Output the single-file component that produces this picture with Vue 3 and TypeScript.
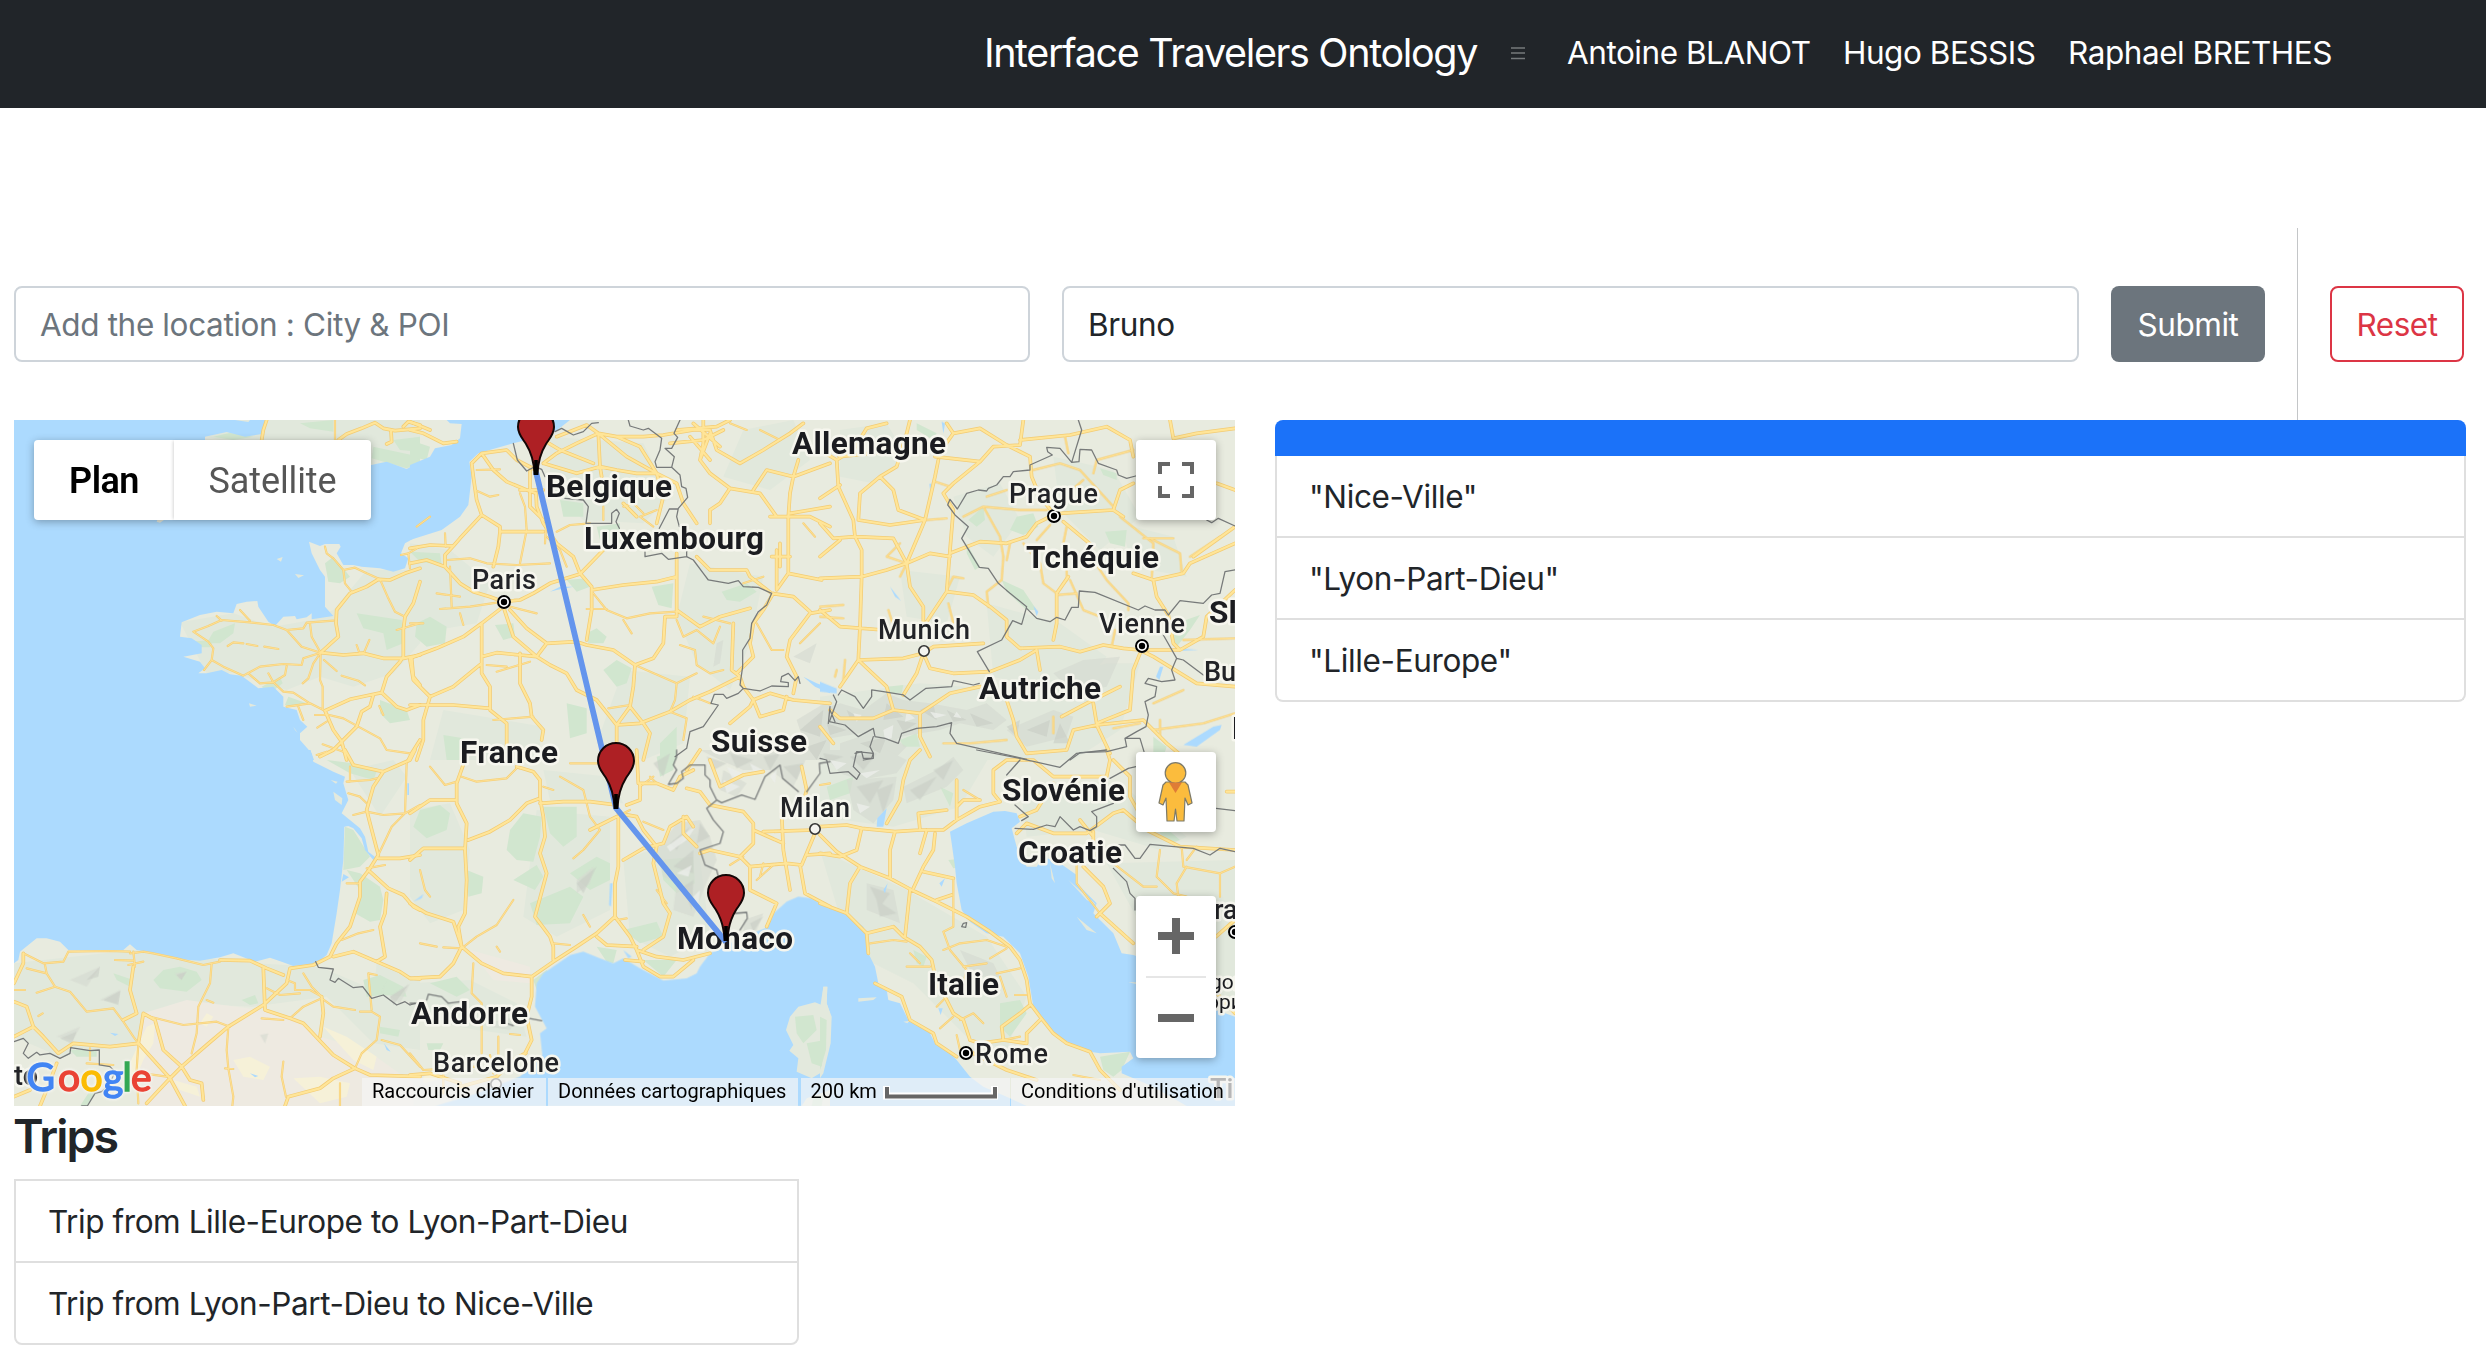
<script setup lang="ts">
import { ref } from 'vue'

interface Label {
  text: string
  x: number
  y: number
  w?: number
  kind: 'country' | 'city' | 'small'
}

type Layer = string[]

const authors = ['Antoine BLANOT', 'Hugo BESSIS', 'Raphael BRETHES']
const place = ref('')
const traveler = ref('Bruno')
const stations = ['"Nice-Ville"', '"Lyon-Part-Dieu"', '"Lille-Europe"']
const trips = ['Trip from Lille-Europe to Lyon-Part-Dieu', 'Trip from Lyon-Part-Dieu to Nice-Ville']

// The map is drawn in six tiles, west to east and north to south, three units per pixel.
const tiles = [
  [0, 410],
  [410, 410],
  [820, 410],
  [0, 750],
  [410, 750],
  [820, 750],
]

const tint: Layer = [
  'M540,637L700,610 820,650 935,630 1000,600 1100,480 1260,480V700L1180,790 1060,830 960,800 860,840 700,790 620,790Z M620,80L790,30H1260V180L1100,160 900,150Z',
  'M0,400L120,420 240,520 200,640 80,660 0,620Z M420,80L700,100 780,260 700,340 520,330 420,240Z M840,460L1060,500 1020,700 960,840 860,760 800,620Z M640,780L840,800 820,1000 700,1050 560,1000Z M1000,60L1150,30 1200,150 1080,240 940,200Z M100,900L400,950 380,1050H60Z',
  'M60,60L200,40 260,140 160,220 60,200Z M400,260L540,220 600,330 520,440 440,380Z M500,580L720,640 860,740 760,860 520,800Z M700,140L880,180 960,320 840,420 720,300Z M240,480L420,500 380,640 260,620Z M900,340L1060,380 1100,500 940,470Z M0,860L300,820 560,840 860,760 960,760 900,960 760,1050H0Z',
  'M42,640L400,600 760,640 960,650 1260,780V900L1120,880 980,740 760,770 540,760 400,880 180,920 42,860Z M1050,60L1180,30 1220,80 1140,200Z M1130,640L1260,690V760L1120,740Z',
  'M0,180L120,160 180,300 160,480 60,520 0,440Z M380,180L600,200 600,480 440,560 340,500Z M640,330L860,250 900,560 780,620 660,560Z M400,60L600,80 640,160 420,150Z M0,700L180,690 320,760 350,860 200,840 0,800Z',
  'M0,300L260,420 500,560 620,740 560,900 440,860 280,700 160,640 60,500Z M0,0H520L420,170 220,230 0,200Z M600,100L900,100 1100,260 1020,300 820,240 620,260Z M860,340L1245,330V780L1100,640 960,520Z',
]

const plain: Layer = [
  '', '', '',
  'M430,790L560,750 780,780 880,800 960,860 1100,900 1240,1000 1240,1068H420L410,900Z',
  'M180,600L360,650 360,700 250,690Z',
  '',
]

const farmland: Layer = [
  '', '', '',
  'M440,830L465,820 460,880 430,930 400,1000 380,960Z M520,990L590,1010 600,1040 540,1020Z M700,930L750,920 810,950 790,990 730,980Z M880,985L960,980 1050,1000 1040,1040 960,1060Z M970,830L1040,860 1130,920 1120,960 1060,930Z M620,790L640,800 620,830 600,820Z',
  'M40,980L90,960 80,990 40,1000Z',
  '',
]

const greens: Layer = [
  'M640,80L690,68 760,80 700,90Z M900,40L1000,30 1000,65 930,55Z M1180,90L1260,80V125L1200,120Z M1120,110L1260,140V160L1220,175 1115,145Z M975,460L1000,440 1030,475 1050,500 1020,520 985,515Z M1070,610L1205,630 1210,700 1160,720 1150,670 1090,655Z M620,700L640,665 705,640 700,670 660,700Z M570,695L640,690 630,712 575,712Z M785,830L840,800 848,820 810,850Z M865,860L920,880 880,890 855,885Z M1140,870L1220,900 1230,930 1170,940 1140,910Z',
  'M0,90L60,110 50,150 0,140Z M0,425L90,430 95,465 30,455Z M450,270L520,280 520,320 460,320Z M470,510L530,505 540,530 500,545Z M20,640L60,620 110,650 105,700 50,710 15,680Z M530,670L560,655 590,680 580,700 535,700Z M725,530L790,520 785,595 745,585Z M935,545L1010,520 1040,545 990,575 950,570Z M580,780L620,750 665,775 650,820 620,830Z M470,880L530,895 530,970 480,985Z M100,975L160,985 170,1050H110Z M255,645L310,640 315,680 280,690Z M750,1000L800,950 800,1050H750Z M560,350L630,340 630,400 570,390Z',
  'M445,330L490,290 495,330 470,350Z M590,320L640,310 655,350 610,375 570,360Z M545,510L610,540 650,600 620,600 560,545Z M855,365L920,360 915,410 870,400Z M1040,650L1140,615 1110,660 1070,710Z M200,830L250,825 245,850 200,850Z M290,40L350,70 340,90 290,60Z M840,175L890,190 890,210 850,195Z M440,400L480,470 465,480 440,430Z M1000,980L1040,1010 1030,1040H1000Z M240,990L290,970 300,1010 250,1010Z',
  'M1035,230L1060,240 1110,320 1080,350 1030,360Z M1040,360L1080,370 1140,410 1150,450 1140,510 1110,515 1065,490 1080,420Z M980,30L1060,40 1130,65 1120,90 1050,70Z M490,660L540,650 590,665 605,690 560,725 480,715 460,690Z M725,750L765,735 775,760 750,765Z M1090,690L1140,675 1210,710 1220,740 1150,735 1100,740Z M1140,830L1200,840 1195,860 1140,850Z M340,670L400,690 390,710 350,690Z M210,900L290,900 290,920 230,920Z M265,1030L300,1010 260,1068H240Z',
  'M30,180L90,165 120,190 110,240 50,265 10,230Z M300,240L340,190 395,200 390,260 370,335 320,330 290,300Z M400,170L500,170 500,260 460,290 420,250Z M310,390L380,345 400,380 375,420Z M170,360L220,380 215,430 175,440Z M360,460L480,410 520,440 480,520 380,525Z M480,370L560,320 600,340 600,390 540,420Z M640,540L740,515 760,560 690,580Z M750,330L850,320 855,400 800,430 760,390Z M560,590L620,600 610,640 590,635Z M60,700L140,680 180,720 140,740Z M370,690L410,660 420,670 380,720Z M740,20L800,0 790,60 750,80Z M700,630L800,630 760,680Z M1160,800L1210,800 1220,840 1180,880 1160,850Z M1190,890L1240,900 1230,950Z M50,880L100,880 90,900 55,900Z',
  'M385,330L435,325 430,350 400,355Z M420,370L490,385 500,430 450,410Z M540,760L600,750 620,790 570,860 540,830Z M840,920L930,905 905,960 880,980 850,960Z M0,940L15,910 12,960 0,980Z M280,600L320,620 310,650 290,640Z M1010,210L1080,270 1050,280 1020,250Z M360,110L400,130 390,170Z M20,110L100,80 90,130 30,150Z',
]

const relief: Layer = [
  '',
  'M1160,930L1260,870V1050H1120L1180,990Z M1150,740L1220,700 1200,760Z M920,700L940,690 930,760 910,770Z',
  'M0,900L60,880 130,900 200,850 250,870 330,880 440,900 500,880 560,930 520,960 420,940 360,960 240,980 220,1000 120,970 0,990Z M60,1000L180,960 260,1010 220,1050H60Z M560,960L700,900 760,920 740,980 620,1010Z M700,790L790,750 900,740 860,830 760,850Z',
  'M210,690L300,650 260,710Z M300,750L360,720 350,760Z M170,860L240,830 220,870Z M525,670L560,665 540,690Z M780,855L805,850 795,880Z M1140,745L1160,690 1150,720Z M1170,740L1230,700 1200,760Z',
  'M870,0H1200L1150,110 1080,60 1000,60 930,30Z M740,300L800,220 870,210 900,260 920,330 880,420 850,500 790,480 800,400 760,380Z M1000,510L1060,490 1040,540 1000,550Z M500,390L550,350 540,400 500,430Z M230,820L320,800 300,840 240,830Z M940,60L1010,100 980,140 930,120Z M1170,830L1230,800 1220,930 1190,920Z',
  'M0,0H200L260,30 230,70 120,90 60,70Z M80,90L230,80 220,150 160,220 100,180Z M250,110L350,60 400,20 430,60 380,110 260,160Z M140,400L220,420 240,520 140,480Z M420,600L520,640 540,680 460,680Z M1010,170L1080,230 1040,210Z',
]

const facets: Layer = [
  '',
  'M1170,960L1240,900 1230,980Z M1190,1010L1250,990 1220,1050Z',
  'M80,900L130,930 90,925Z M200,880L250,920 190,930Z M300,900L340,880 350,930Z M380,900L440,930 400,935Z M20,940L80,960 30,975Z M120,1000L200,980 180,1030Z M620,960L690,930 680,980Z M720,940L750,1000 700,1000Z M560,950L600,930 590,980Z M230,930L290,940 250,965Z M450,910L520,940 470,950Z',
  'M260,690L300,650 295,680Z M310,750L362,722 355,765Z M180,865L230,845 215,880Z M1170,740L1225,705 1180,765Z M530,675L560,665 545,690Z',
  'M890,20L950,40 910,60Z M960,10L1030,30 980,55Z M1060,20L1110,10 1080,60Z M780,280L840,230 800,300Z M790,350L850,300 850,370Z M820,410L850,390 845,480Z M870,220L900,260 860,280Z M500,400L560,350 520,430Z M1020,520L1060,500 1030,545Z M1120,50L1180,40 1160,90Z M730,40L780,10 760,80Z M1180,850L1215,810 1200,880Z',
  'M10,10L70,20 20,40Z M90,20L170,10 130,60Z M110,110L190,90 150,160Z M170,120L220,100 190,190Z M270,120L350,80 300,150Z M150,410L210,430 180,470Z M340,60L400,30 370,90Z M170,450L230,490 180,500Z',
]

const snow: Layer = [
  '',
  '',
  'M190,960L220,945 215,985 195,990Z M100,910L125,915 110,935Z M330,905L380,915 345,925Z M260,905L285,925 255,935Z M410,905L425,925 400,920Z',
  '',
  'M950,50L1000,70 970,90Z M1020,40L1060,60 1030,65Z M770,290L860,225 830,270 780,305Z M800,370L845,345 835,380Z M1080,80L1100,60 1095,100Z M940,90L990,110 950,130Z M850,440L870,420 865,470Z',
  'M30,30L80,40 50,60Z M120,70L180,60 140,85Z M110,160L150,170 120,190Z',
]

const water: Layer = [
  'M42,30H795L785,72 735,80 680,66 615,80 615,92 520,200 470,335 480,338 492,330 600,250 800,190 1000,160 1113,165 1160,155 1220,177 1260,155 1260,375 1215,400 1203,430 1225,445 1215,475 1180,485 1140,475 1085,470 1060,465 1030,465 1010,430 1022,410 1018,402 975,402 960,408 927,395 935,430 960,480 975,500 975,590 1000,618 935,628 935,610 920,622 890,628 885,618 850,620 825,648 805,635 775,590 772,573 740,575 710,582 700,610 650,605 600,615 545,637 540,680 575,685 605,705 605,730 550,740 600,755 615,775 595,790 620,790 665,780 690,793 725,797 775,835 820,830 850,860 850,890 890,900 900,930 922,950 900,970 900,990 935,1030 942,1050H42Z',
  'M0,165L60,140 75,115 125,105 150,85 155,42 120,40 110,30H480L435,65 370,85 310,100 205,130 178,155 185,200 175,285 150,320 95,360 0,390Z M1180,800L1220,820 1260,835V850L1215,830Z M420,545L450,530 490,530 440,540Z',
  'M0,815L50,835 50,850 0,845Z M1090,1005L1180,950 1205,945 1200,960 1130,1010Z M1020,770L1030,770 1018,810 1008,800Z M640,588L655,605 650,618Z M210,530L243,572 225,560Z M328,222L335,220 330,240Z M1080,715L1135,720 1090,722Z M375,40L370,70 365,35Z',
  'M42,0H932L940,35 1000,65 1035,80 1030,100 1045,150 1025,190 1080,235 1095,260 1105,305 1130,325 1120,330 1095,300 1085,265 1060,235 1045,228 1033,230 1030,330 1020,420 1010,490 995,580 980,615 950,640 880,648 845,635 810,623 765,635 700,610 660,622 600,632 540,628 480,612 410,600 390,583 370,600 205,600 180,575 140,565 110,565 60,605 55,630 42,640Z M1030,372L1047,382 1025,395Z M1222,100H1227V135H1222Z M330,848L355,852 345,858Z M750,970L775,978 765,982Z M1152,880L1172,905 1160,900Z',
  'M1260,475L1205,445 1165,440 1130,455 1085,495 1065,535 1000,560 900,610 870,650 860,670 830,685 760,692 690,655 640,625 610,640 570,625 520,605 480,615 430,650 400,670 380,700 375,770 410,835 390,850 397,915 330,980 200,1030 75,1068H1260Z M600,400L608,400 603,470 597,465Z M10,455L40,432 35,445Z M640,600L665,620 655,625Z',
  'M0,455L20,465 80,490 130,530 140,560 145,610 165,650 175,700 200,720 205,750 240,760 265,810 325,840 345,880 385,905 410,930 450,980 490,1010 560,1040 620,1068H0Z M390,245L440,220 520,185 555,183 590,190 600,215 575,235 590,290 620,350 650,350 670,320 720,340 770,375 770,400 830,460 820,490 840,510 880,550 905,610 940,615 1010,640 1188,780 1245,800V1068H1100L1000,1010 905,970 905,950 940,925 930,905 840,910 810,905 770,890 715,860 665,810 640,770 625,680 600,610 550,560 500,550 450,515 425,480 410,400 405,350 395,280Z M200,175L190,230 170,230 172,205Z M355,775L368,775 362,795Z M358,400L375,385 365,410Z M190,420L203,400 195,430Z',
]

const islands: Layer = [
  'M830,447L848,441 843,455Z M885,492L912,496 895,504Z M747,880L770,887 750,890Z M705,30H750L745,36Z M880,950L893,968 885,960Z',
  '',
  '',
  'M1000,125L1027,145 1025,165 1005,150Z M992,90L1013,95 1008,101Z',
  'M1240,710H1252L1250,760 1260,790V880L1230,970 1205,985 1160,965 1165,925 1138,902 1150,885 1128,840 1140,800 1165,770 1215,757 1235,765Z M1175,1068L1190,1045 1260,1020V1068Z',
  'M0,775L10,710H22L20,760 35,800 32,880 10,970 0,985Z M115,745L170,742 160,750 115,755Z M250,815L270,812 262,820Z M690,340L705,400 695,385Z M745,390L790,430 830,465 800,450Z M770,500L830,550 800,540Z M925,697H948V702Z',
]

const islandWoods: Layer = [
  '', '', '', '',
  'M1155,800L1210,795 1220,840 1180,880 1160,850Z M1190,880L1245,870 1235,950 1205,940Z M1210,1045L1240,1035 1235,1068H1205Z',
  'M0,800L20,810 18,900 0,960Z',
]

const majorRoads: Layer = [
  'M785,90L790,60 800,30 M1015,90L1040,72 1085,55 1125,38 1150,55 1185,62 1260,55 M1173,62L1175,95 1160,102 M1210,50L1225,35 1260,45 M1260,475L1215,490 1170,510 1135,508 1100,530 1050,550 1010,600 1008,640 1015,680 962,728 M1260,735L1210,745 1150,745 1090,730 1030,735 962,728 M1260,885L1220,900 1190,890 1145,848 1110,855 1050,868 975,902 M1145,848L1160,800 1200,755 1210,740 1210,660 1215,620 1240,580 1260,515 M975,902L1000,960 1025,995 1040,1050 M1025,995L1070,950 1085,905 1110,890 1120,855 M1235,745L1240,800 1260,825 M1260,990L1235,1030 1225,1050 M1025,995L1000,1020 960,1040',
  'M0,60L40,70 100,100 140,95 M0,35L60,60 M0,415L60,405 130,408 150,385 215,315 270,350 270,365 400,365 M215,315L200,270 190,200 185,160 215,130 290,120 320,150 378,180 M215,130L250,180 290,215 350,240 378,250 M270,365L265,410 250,470 M0,460L50,450 105,470 150,520 190,545 240,560 280,575 M105,470V435L130,408 M378,250L380,290 400,340 440,400 490,440 510,490 545,530 545,600 530,690 M280,575L330,570 370,550 420,520 510,492 580,420 M545,540L640,525 740,515 800,500V430 M800,500V620L765,620 760,700 730,745 675,765 M280,590L310,680 380,740 420,765 470,790 500,840 560,870 600,920 620,945 690,940 780,905 840,870 900,845 990,800 M0,745L80,715 160,680 215,640 280,590 M215,640V790L240,830V900L290,940V1050 M215,740L260,728 330,735 380,740 410,700 500,695 530,705 610,720 675,765 670,830 660,890 620,945V1000 M660,890L700,940 720,970 700,1050 M0,885L130,885 240,895 M215,760L130,830 60,860 40,930 40,990 20,1050 M60,860L10,810 0,750 M330,730V820L360,880 365,920 400,960 395,990 M300,600L350,655 410,700 M800,600L870,650 930,620 1020,595 M1090,550L1060,600 1030,640 1020,700 1030,740 980,790 M970,640L965,780 990,800 1000,830 1030,870 1020,890 960,940 M1030,870L1080,850 1150,870 1260,880 M1030,870L1050,920 1120,900 1130,860 M1150,850L1160,800 1130,740 1140,690 1200,610 1260,600 M1085,550L1150,560 1200,605 M1085,550L1020,500 1010,480 900,480 860,440 M1135,490V320L1140,250 1150,200 1165,150 M1100,420V540L1135,490 1235,510 M1080,320H1200L1260,350 M1140,310L1200,300 1260,290 M1100,320L1050,250 960,235 900,190 870,150 900,70 M960,235L930,280 900,300 900,340 M860,340L820,280 800,220 740,190 680,190 620,180 570,170 500,190 400,160 M400,160L440,130 500,100 565,70 620,80 700,80 760,75 850,60 900,60 920,120 990,160 1060,120 1140,70 1180,40 M400,90L450,120 550,160 M565,70L570,170 575,200 M565,70L650,140 740,190 760,260 740,340 M565,70L530,45 440,80 M740,190L690,110 620,80 M880,30V100L870,150 M800,60L920,50 960,30 M840,80L900,150 M780,100L880,90 940,60 M850,40L930,110 M640,280L680,320 M1030,240L1070,180 1150,200 1260,160 M360,180V290L400,330 M330,240H400 M1110,400V470 M1085,440H1140',
  'M0,120L50,150 100,120 140,55 200,40 M50,150L55,230 100,330 105,380 125,420 125,500 120,650 115,750 60,830 M0,265L60,225 M0,340L40,385 105,380 220,385 260,460 M0,505L125,500 200,480 260,460 330,430 390,440 M0,440L60,390 M115,330L210,345 315,330 345,200 355,150 M345,140L480,155 400,220 370,250 400,300 390,420 380,545 350,590 310,650 M380,545L460,555 510,590 560,630V680L600,715 720,710 780,725 850,705 910,715 960,720 1080,720 M260,460L270,530 310,590 310,650 M310,730L250,745 115,750 M310,730L340,710 490,700 M310,730L290,790 250,855 M310,730L330,775 400,790 510,785 600,750 650,720 M270,30L260,70 230,170 180,200 120,250 115,330 M180,200L220,240 235,300 315,330 260,460 M380,40L400,70 480,55 560,105 630,140 635,200 660,260 700,310 M400,70L350,140 M480,155L520,110 600,105 610,30 M600,90L750,75 860,50 930,90 940,140 M700,315L650,340 620,380 560,400 480,395 390,430 M720,310L880,300 900,240 940,220 M730,335L820,410 M650,720L660,780 M700,690L710,640 710,550 745,500 M1000,510L940,490 M1000,510L1090,490 1110,460 1245,400 M1120,440L1245,350 M1000,510L1010,560 1045,615 1060,700 1080,720 1150,680 1160,620 1245,540 M960,720L1000,740 1130,820 1245,830 M960,730L940,780 930,900 830,940 820,880 M560,870L580,930 590,980 620,1030 740,1020 760,960 830,945 870,1030 M115,750L200,830 220,900 300,910 390,850 480,830 M300,910V980L330,1040 M30,900L60,925 160,925 220,900 M830,945L970,930 1040,1000 1100,1050 M725,920L800,880 900,830 M0,600L60,650 190,660 M1060,85L1130,70 1245,55 M1050,30L1060,85 M0,80L60,140 240,120 M880,300L910,320 M0,950L40,1000 M1190,220L1245,240',
  'M42,700L70,640 70,610 M42,755L80,770 100,830 130,860 175,910 220,880 330,890 415,880 430,790 M42,860L100,830 M400,650L390,720 410,790 370,810 M430,790L465,810 490,900 545,950 570,990 605,1000 610,1050 M415,880L510,985 545,950 620,885 685,830 790,765 860,700 870,655 940,645 990,620 1010,580 1050,530 1080,440 1080,395 1110,355 1135,315 1110,220 1100,180 1120,110 1150,65 1230,30 1245,0 M1150,65L1060,45 1035,0 M660,630L750,632 800,655 850,675 M790,655L795,780 870,805 910,820 1000,915 1065,955 1110,975 1260,980 M965,740L970,790 960,860 M510,985L440,1060 M510,985L555,1068 M1065,955L1000,985 960,1015 865,1040 855,1068 M1110,365L1165,415 1210,435 1240,470 1260,480 M1135,325L1200,325 1260,315 M1160,430L1155,490 1140,530 1155,620 1130,635 M1000,620L1060,605 1130,635 1200,665 1230,685 1260,687 M42,1040L90,1020 M170,940L140,1020 120,1068',
  'M165,30L140,100 140,160 170,220 165,300 170,390 165,490 145,530 155,590 M140,150L60,150 0,190 M0,330L40,295 165,295 M175,270L240,245 300,210 350,160 390,145 390,90 370,65 320,50 M390,145L400,200 405,260 390,310 410,370 375,500 420,560 430,590V630 M390,160L460,155 540,155 620,165 M0,460L50,490 130,515 155,590 215,640 280,670 365,680 430,635 500,590 560,550 615,500 615,400 625,350 625,200 M155,590L130,640 90,680 0,685 M365,680V740L350,800 365,870 345,910 310,930 260,980 150,1010 M0,975L60,970 150,1000 M625,190L680,200 700,240 740,290 M615,500L660,560 680,600 740,620 820,630 900,610 M560,560L590,585 680,590 M680,600L700,650 750,680 790,680 850,630 M740,290L730,340 745,400 760,460 780,490 760,560 700,600 M640,330L700,295 760,280 780,230 830,200 850,230 M650,165L690,150 690,100 740,100 790,120 810,80 850,60 M680,0L685,100 M830,115L870,125 900,165 1000,185 1030,220 1030,280 990,320 900,300 870,310 M990,320L1020,350 1130,340 1175,345 1215,250 M1020,350V420L1100,460 1070,530 M1115,190L1120,300 1140,420 M1030,240L1120,280 M1060,245L1210,240 M1170,345L1185,430 1260,470 M900,30L930,110 1000,75 1060,65 M1175,50L1190,120 1170,190 M820,200V250L860,290 M540,240L620,200 M645,630L700,635 M1190,315L1260,310 M830,60L870,0',
  'M0,230L80,225 125,235 225,245 300,240 370,240 410,210 480,170 540,155 M225,245L210,300V385 M0,255L50,305 120,350 210,385 275,420 350,455 440,500 510,545 570,590 600,630 620,690 630,760 660,800 700,850 740,880 810,905 840,960 870,990 M200,220L240,150 250,90 270,30 300,0 M300,240L295,190 380,180 M320,240L300,310 M345,250L340,300 310,350 280,415 M310,365L400,385 M350,450L395,435 M410,90V210 M410,170L430,150 480,150 M125,235L110,300 60,320 0,310 M120,350L90,400 80,490 140,550 220,530 250,560 300,590 335,630 350,700 380,750 400,790 430,810 450,870 M270,420L255,560 M140,550L145,610 M0,460L80,490 M165,700L245,740 270,810 340,850 350,880 410,920 M440,900L560,960 650,990 M660,810L620,850V880 M550,870L545,830 600,790 630,765 M450,870L480,880 550,870 620,880 M540,155L520,130V60L560,30H640L700,80H860L870,30 860,0 M600,200L650,180 700,100 M590,250L620,220 700,250 800,250 880,190 910,180 980,240 1080,290 1245,300 M820,245V340 M790,350L850,410 870,460 830,500 M840,490L940,580 M880,30L930,80 930,140 980,230 M780,210L820,260 M1188,560L1245,510 M1220,125H1245 M870,990L900,1020 M1190,730L1245,790',
]

const minorRoads: Layer = [
  'M962,728L905,710 860,660 820,645 750,637 665,630 625,648 580,665 625,695 640,715 635,750 612,780 M635,750L670,770 730,797 780,770 850,762 905,765 910,745 962,728 M860,660L910,655 920,638 1000,632 M930,640L935,680 962,728 M962,728L940,760 925,805 908,820 M962,728L960,810 968,830V900 M972,750L1010,783 M1025,797L1075,812 1095,826 M745,790L780,820 820,817 850,845 880,848 930,880 975,902 M860,768L855,795 820,817 805,790 M720,600L750,632 M650,618L665,632 M683,708L700,697 730,700 M740,702L772,708 M793,710L835,717 M975,410L980,430 1000,445 1030,480 1035,520 1055,545 M1030,480L1065,473 1100,490 1140,508 1165,565 1185,605 1215,620 M1070,705L1078,728 1092,728 1108,690 M1190,660L1260,640 M975,912L1030,925 1075,950 1140,985 1160,1020 1230,1030 M860,890L930,880 M895,890L910,930 M952,953L980,935 M1138,888L1150,915 M1203,435L1225,430 1260,410 M1225,430L1230,475 M1005,30V90 M945,915H980 M968,1003L1030,1025',
  'M200,180L270,178 M195,240L240,260 265,255 M330,250L345,290 350,360 330,460 M110,450L180,445 230,460 320,465 420,460 M105,370L107,410 M120,470L125,590 M90,597L180,590 280,575 M150,610L160,645 M280,585L380,610 M410,310L405,400 M440,365L480,345 540,340 M550,550L590,600 650,625 720,610 800,605 M530,597H590 M640,630L665,670 M675,765L800,820 860,790 M800,820L795,870 780,905 830,925 820,990 M595,895L660,885 M810,705L855,720 860,765 900,790 940,780 M800,630L820,680 860,660 910,700 M250,930L370,920 M0,640L40,640 M1040,640L1085,720 1120,720 M80,550L150,560 M230,765L290,770 M260,785L360,755 M930,650L910,700 M880,620L960,640 M1170,700L1230,640 M1180,340L1215,380 M640,290L670,280 700,310 M690,320L740,300 M20,350L60,320 M580,290V330 M960,40L1010,60 M1050,60L1110,90 M690,320L730,350 M1000,520L1060,500 M850,860L900,880 M410,380L450,420 470,470',
  'M640,180L720,160 780,180 880,290 M790,210L720,270 M430,320L490,290 600,300 680,300 M490,290L540,380 550,440 545,510 500,545 505,590 M610,400L660,460 670,520 710,550 M740,350L730,400 M740,450V510 M820,450L860,510 925,580V600 M990,385L1080,430 1085,490 M900,320L1000,400 995,510 M1110,440L1200,380 M0,590L70,585 M0,620L70,625 M200,440L260,460 240,500 M380,540L400,500 430,505 M385,580L400,640 M75,750L70,810 M205,600L230,680 M875,710L885,660 M1090,690L1245,685 M1000,960L1150,940 1245,910 M370,1000L450,1000 560,990 M345,215L390,230 M320,330L380,325 M570,400L560,450 M650,390L690,345 M750,510L790,600 840,620 M560,240L500,260 M820,190L830,150 940,120 M770,550L710,555 M240,400L200,440 M1000,880L1090,840 M700,920V970 M735,80L745,130 M970,385H1060 M45,800L50,780 M1020,930V980 M880,955L960,940',
  'M70,610L130,640 190,635 205,605 330,603 390,605 M80,655L140,670 165,710 210,725 260,785 340,775 370,815 400,860 415,880 M165,710L110,728 M140,670L135,645 M42,720H75 M390,610L430,605 460,610 530,625 610,645 660,635 M345,630L400,632 M385,645L430,635 M635,640L630,700 595,770 590,850 575,910 M430,795L550,825 650,815 690,830 M685,830L680,900 685,955 700,1040 697,1068 M675,955L700,957 M415,880L410,960 415,1060 M1065,955L1085,910 1130,870 1140,800 1115,785H1080 M1115,780L1105,670 1130,675 M870,805L910,770 965,745 1000,770 1065,780 M860,690L885,700 885,720 930,720 965,740 M800,715L840,735 900,730 M910,670L935,710 965,740 M785,805L850,810 M1145,870L1200,885 1260,950 M850,935L845,980 858,1040 M1040,95L1110,90 1130,85 M1045,130L1080,140 1100,160 M1060,195L1100,185 1150,195 1215,190 1260,165 M1220,40L1215,190 1175,230 1135,315 M1025,570L1075,550 1120,540 M270,895V930 M115,798L128,790 M620,750L640,758 M1040,400H1080 M1100,355L1155,345 M1050,50V95 M400,605L405,650 M260,940L340,945 M1020,1000V1068 M430,970L500,980 M950,15L980,5',
  'M190,640L185,730 215,760 215,910 M30,580L80,590 M100,592L155,595 200,560 260,525 310,450 M30,360L45,420 60,440 M450,80L520,120 530,160 540,200 570,240 520,300 490,325 M155,80L200,95 290,85 320,55 M60,50L105,105 140,95 M265,860V920 M0,910L40,960 200,950 M430,580L480,585 M260,590L270,605 M520,495L540,530 M700,215L760,240 M300,852L330,855 M245,1000L280,960 350,910 M690,110L730,80 M720,80L740,100 M620,200L660,180 M740,420L770,460 M480,40L560,40 M400,110L430,120 M1040,390L1090,345 M960,345L1000,320 M1060,340L1050,380 M620,510L650,505 M240,915L250,970 M100,970V1030',
  'M150,580L220,570 260,575 M260,650L330,650 M400,390V530L370,545 390,600 440,660 430,700 M370,600L420,580 500,570 560,590 M430,650L500,640 M530,670L600,655 M510,625L560,595 M400,800L360,835 M420,810L460,790 490,820 M410,855L420,900 M585,735H620 M770,340V400L840,490 M880,340L970,410 1010,410 M1020,300L1010,380 1060,430 1100,440 M1085,290L1090,350 1200,370 1245,350 M1200,370V440 M1100,350L1070,400 1075,440 M0,105L30,100 M560,740L540,680 M370,750L350,770 M760,975L840,990 M300,640L270,610 M1130,290L1100,330 M430,120L480,150 M600,860L550,870',
]

const borders: Layer = [
  '',
  'M310,100L322,150 350,183 375,170 395,178 405,200 M465,265L520,270 535,290 528,340 605,340 605,310 620,298 628,310 618,335 628,355 M435,65L455,55 490,75 520,65 545,40 565,38 M655,30L660,48 700,60 715,55 755,85 750,120 735,155 740,172 785,172 M810,30L792,70 803,82 785,115 765,115 793,140 785,172 810,195 815,230 828,235 833,262 805,295 800,320 808,350 M805,297H778L748,355 M705,425V440L755,430 775,448 830,440 850,450 880,490 895,510 955,520 985,512 1000,530 1045,532 1085,550 1070,585 1045,605 1025,640 1020,685 998,720 998,770 990,825 1000,835 985,850 950,865 940,853 913,853 903,880 925,885 880,950 840,965 830,1015 795,1040 M830,440V420 M1000,835L1050,843 1085,828 1135,830V818L1112,815 1115,800 1135,790 1155,812 1165,800 1170,820 M1255,940L1260,890',
  'M775,30L785,60 755,157 720,115 680,112 683,125 697,135 630,165 630,180 580,185 570,200 550,200 530,225 505,235 500,243 475,240 440,250 412,297 390,268 383,285 405,315 445,350 425,385 478,472 505,475 535,520 570,550 620,590 605,643 578,632 545,690 472,725 508,785 M478,820L460,825 400,812 395,830 318,835 270,870 250,855 190,845 155,840 155,860 130,895 105,860 65,840 55,855 M755,157L777,155 780,118 815,120 835,160 890,180 895,195 920,205 947,198 M1160,330L1175,338 1195,325 1245,348 M1245,480L1215,485 1200,550 1175,555 1150,580 1080,572 1045,615 1035,600 1005,600 975,588 955,600 825,547 778,543 775,592 755,592 735,630 710,622 690,635 650,625 620,595 M1030,675L1070,745 1055,780 1065,810 1025,815 985,805 975,820 1010,830 1005,860 975,875 985,915 978,950 950,965 915,985 960,985 972,1025 M1070,745L1090,750 1150,795 M40,855L50,875 28,935 75,945 115,980 160,955 165,980 195,985 235,1000 245,970 290,955 350,950 395,938 390,970 410,1000 620,1048 M30,900L45,935 M915,985L920,1010 860,1025 780,1028 750,1050 M160,980L150,1010 160,1030 155,1045 130,1045 125,1025 105,1030',
  'M947,635L955,652 1000,657 990,690 1005,697 1015,685 1060,713 1088,710 1115,745 1150,735 1190,765 1215,755 1230,765 1245,760 M42,875L70,865 85,880 70,910 85,925 110,907 120,915 150,910 180,925 210,910 212,893 270,902 298,900V945L330,950 345,965 330,1000 305,1025 285,1030 262,1068H245',
  'M50,750L55,733 95,740 115,760 150,755 M0,760L40,760 M355,805L395,812 M290,820L310,827 M800,0L800,20 790,45 800,60 775,103 800,100 820,85 815,65 840,45 885,45 885,75 900,90 900,110 920,150 890,175 910,210 940,245 930,280 870,300 885,345 920,360 925,380 M975,490L1010,487 1012,505 990,540 M920,150L935,158 995,135 1035,148 1065,80 1110,45 1118,85 1165,125 M1190,125L1230,70 1228,40 1260,35',
  'M0,25L20,30 30,70 85,65 110,88 120,70 100,50 110,5 160,10 160,25 130,30 M470,0L600,25 720,52 770,10 860,0 M600,30L560,75 M585,165L625,200 605,212 M585,235L640,238 680,225 705,230 720,200 760,240 780,230 810,242 830,230V200L815,185 880,160 M870,85L925,55 948,50 M895,285L915,285 945,325 960,325 990,283 1030,287 1120,295 1170,315 1200,295 1245,305 M880,355L920,395 930,430 945,445V480 M1188,175L1245,182 M425,530L430,520 440,518 437,532Z',
]

const labels: Label[] = [
  { text: 'Allemagne', x: 792, y: 454, w: 154, kind: 'country' },
  { text: 'Belgique', x: 546, y: 497, w: 126, kind: 'country' },
  { text: 'Luxembourg', x: 584, y: 549, w: 180, kind: 'country' },
  { text: 'Tchéquie', x: 1026, y: 568, w: 133, kind: 'country' },
  { text: 'Autriche', x: 979, y: 699, w: 122, kind: 'country' },
  { text: 'France', x: 460, y: 763, w: 98, kind: 'country' },
  { text: 'Suisse', x: 711, y: 752, w: 96, kind: 'country' },
  { text: 'Slovénie', x: 1002, y: 801, w: 123, kind: 'country' },
  { text: 'Croatie', x: 1018, y: 863, w: 104, kind: 'country' },
  { text: 'Monaco', x: 677, y: 949, w: 116, kind: 'country' },
  { text: 'Italie', x: 928, y: 995, w: 71, kind: 'country' },
  { text: 'Andorre', x: 411, y: 1024, w: 117, kind: 'country' },
  { text: 'Sl', x: 1209, y: 623, kind: 'country' },
  { text: 'H', x: 1232, y: 739, kind: 'country' },
  { text: 'Paris', x: 472, y: 588.5, w: 64, kind: 'city' },
  { text: 'Prague', x: 1009, y: 503, w: 89, kind: 'city' },
  { text: 'Munich', x: 878, y: 639, w: 92, kind: 'city' },
  { text: 'Vienne', x: 1099, y: 633, w: 86, kind: 'city' },
  { text: 'Bu', x: 1204, y: 680.5, kind: 'city' },
  { text: 'Milan', x: 780, y: 817, w: 70, kind: 'city' },
  { text: 'Rome', x: 975, y: 1063, w: 73, kind: 'city' },
  { text: 'Barcelone', x: 433, y: 1072, w: 126, kind: 'city' },
  { text: 'ra', x: 1214, y: 919, kind: 'city' },
  { text: 'gor', x: 1210, y: 989, kind: 'small' },
  { text: 'ори', x: 1207, y: 1009, kind: 'small' },
  { text: 'to', x: 14, y: 1085, kind: 'city' },
  { text: 'Ti', x: 1210, y: 1098, kind: 'city' },
]

const capitals = [[504, 602], [1054, 516], [1142, 646], [966, 1053], [1235, 932]]
const towns = [[924, 651], [815, 829], [496, 1084]]
const pins = [[536, 427], [616, 761], [726, 893]]
const logo: [string, number, string][] = [
  ['G', 26.5, '#4285f4'], ['o', 58, '#ea4335'], ['o', 80.5, '#fbbc05'],
  ['g', 103, '#4285f4'], ['l', 122.5, '#34a853'], ['e', 131, '#ea4335'],
]

const layers = [
  { name: 'tint', shapes: tint },
  { name: 'plain', shapes: plain },
  { name: 'farmland', shapes: farmland },
  { name: 'green', shapes: greens },
  { name: 'relief', shapes: relief },
  { name: 'facet', shapes: facets },
  { name: 'snow', shapes: snow },
  { name: 'water', shapes: water },
  { name: 'island', shapes: islands },
  { name: 'green', shapes: islandWoods },
  { name: 'minor-case', shapes: minorRoads },
  { name: 'major-case', shapes: majorRoads },
  { name: 'minor', shapes: minorRoads },
  { name: 'major', shapes: majorRoads },
  { name: 'border', shapes: borders },
]
</script>

<template>
  <div class="page">
    <nav class="navbar">
      <a class="brand">Interface Travelers Ontology</a>
      <svg class="burger" width="14" height="14" viewBox="0 0 14 14"><path d="M0 2H14M0 7H14M0 12.500H14" /></svg>
      <a v-for="name in authors" :key="name" class="nav-link">{{ name }}</a>
    </nav>

    <form class="search" @submit.prevent>
      <input v-model="place" class="field" placeholder="Add the location : City &amp; POI" />
      <input v-model="traveler" class="field wide" />
      <button class="btn submit" type="submit">Submit</button>
      <div class="rule"></div>
      <button class="btn reset" type="reset">Reset</button>
    </form>

    <main class="content">
      <section class="left">
        <div class="map">
          <svg class="canvas" width="1221" height="686" viewBox="14 420 1221 686">
            <g v-for="(layer, n) in layers" :key="n" :class="layer.name">
              <g v-for="(d, i) in layer.shapes" :key="i" :transform="`translate(${tiles[i][0]} ${tiles[i][1]}) scale(.33333)`">
                <path v-if="d" :d="d" />
              </g>
            </g>

            <g v-for="(c, i) in capitals" :key="'c' + i" :transform="`translate(${c[0]} ${c[1]})`">
              <circle r="7" fill="#fff" /><circle r="6" fill="#fff" stroke="#000" stroke-width="2" /><circle r="3.2" />
            </g>
            <circle v-for="(c, i) in towns" :key="'t' + i" :cx="c[0]" :cy="c[1]" r="5.200" fill="#f4f4ef" stroke="#333" stroke-width="1.600" />

            <text
              v-for="l in labels"
              :key="l.text"
              :class="l.kind"
              :x="l.x"
              :y="l.y"
              :textLength="l.w"
            >{{ l.text }}</text>

            <path class="route" d="M536 472 616 808 726 942" />
            <g v-for="(p, i) in pins" :key="'p' + i" :transform="`translate(${p[0]} ${p[1]})`">
              <path class="pin" d="M0-18C10-18 18-10 18 0 18 7 14 11 10 17 5 25 2 34 1.500 47H-1.500C-2 34-5 25-10 17-14 11-18 7-18 0-18-10-10-18 0-18Z" />
              <path d="M-1.800 33H1.800L2 48H-2Z" />
            </g>

            <g class="logo">
              <text v-for="(g, i) in logo" :key="i" :x="g[1]" y="1090.500" :fill="g[2]" :stroke="g[2]">{{ g[0] }}</text>
            </g>
          </svg>

          <div class="types">
            <button class="type active">Plan</button>
            <button class="type">Satellite</button>
          </div>

          <button class="control fullscreen" aria-label="fullscreen">
            <svg width="36" height="36" viewBox="0 0 36 36"><path d="M0 0H12V4H4V12H0ZM24 0H36V12H32V4H24ZM0 24H4V32H12V36H0ZM32 24H36V36H24V32H32Z" fill="#666" /></svg>
          </button>

          <button class="control pegman" aria-label="street view">
            <svg width="36" height="62" viewBox="0 0 36 62">
              <g fill="#fbbc3d" stroke="#7d7a68" stroke-width="1.200" stroke-linejoin="round">
                <path d="M8 21H27L30 24 34 42 30 44 27 37 26 60H19L17.500 48 16 60H9L8 37 5 44 1 42 5 24Z" />
                <circle cx="17.500" cy="12" r="10.300" />
              </g>
              <path d="M11 21.500H24L17.500 32Z" fill="#df7c36" />
            </svg>
          </button>

          <div class="control zoom">
            <svg width="80" height="162" viewBox="0 0 80 162">
              <path d="M22 36H36V22H44V36H58V44H44V58H36V44H22ZM22 118H58V126H22Z" fill="#666" />
              <path d="M10 80H70V82H10Z" fill="#e6e6e6" />
            </svg>
          </div>

          <div class="legal">
            <span class="shortcuts">Raccourcis clavier</span>
            <span class="credits">Données cartographiques</span>
            <span class="scale">
              200 km
              <svg width="116" height="18" viewBox="0 0 116 18">
                <path d="M3.500 2V12H111.500V2" stroke="#fff" stroke-width="7" fill="none" />
                <path d="M4 3V12.500H112V3" stroke="#666" stroke-width="4" fill="none" />
              </svg>
            </span>
            <span class="terms">Conditions d'utilisation</span>
          </div>
        </div>

        <h4 class="title">Trips</h4>
        <ul class="list trips">
          <li v-for="trip in trips" :key="trip">{{ trip }}</li>
        </ul>
      </section>

      <section class="right">
        <div class="bar"></div>
        <ul class="list stations">
          <li v-for="station in stations" :key="station">{{ station }}</li>
        </ul>
      </section>
    </main>
  </div>
</template>

<style>
body {
  margin: 0;
  background: #fff;
}
</style>

<style scoped>
* {
  box-sizing: border-box;
}
.page {
  width: 2486px;
  height: 1354px;
  overflow: hidden;
  font: 400 31.500px/48px Inter, "Liberation Sans", sans-serif;
  letter-spacing: -0.37px;
  color: #212529;
}
.navbar {
  height: 108px;
  padding: 0 154px 3px 0;
  display: flex;
  justify-content: flex-end;
  align-items: center;
  background: #212529;
  color: #fff;
  letter-spacing: -0.47px;
}
.brand {
  font-size: 39.500px;
  letter-spacing: -1.35px;
  margin-right: 34px;
}
.burger {
  margin-right: 42px;
  fill: none;
  stroke: #75797b;
  stroke-width: 1.500;
}
.nav-link + .nav-link {
  margin-left: 32.500px;
}
.search {
  height: 192px;
  margin-top: 120px;
  padding: 0 22px 0 14px;
  display: flex;
  align-items: center;
}
.field {
  width: 1016px;
  height: 76px;
  margin: 0 32px 0 0;
  padding: 0 24px;
  border: 2px solid #ced4da;
  border-radius: 8px;
  background: #fff;
  font: inherit;
  letter-spacing: inherit;
  color: inherit;
  outline: 0;
}
.field.wide {
  width: 1017px;
}
.field::placeholder {
  color: #6c757d;
  opacity: 1;
}
.btn {
  height: 76px;
  padding: 2px 0 0;
  border-radius: 8px;
  font: inherit;
  letter-spacing: -0.45px;
}
.submit {
  width: 154px;
  border: 0;
  background: #6c757d;
  color: #fff;
}
.reset {
  width: 134px;
  border: 2px solid #dc3545;
  background: #fff;
  color: #dc3545;
}
.rule {
  align-self: stretch;
  width: 1px;
  margin: 0 32px;
  background: #c4c6c8;
}
.content {
  display: flex;
  padding-left: 14px;
}
.left {
  width: 1221px;
}
.right {
  width: 1191px;
  margin-left: 40px;
}
.map {
  position: relative;
  width: 1221px;
  height: 686px;
  overflow: hidden;
  background: #e8ebdf;
  font-family: Roboto, "Liberation Sans", sans-serif;
  letter-spacing: 0;
}
.canvas {
  display: block;
}
.tint { fill: #e1e8dc; }
.plain { fill: #eeeae1; }
.farmland { fill: #f6f1d8; }
.green { fill: #d1e6cf; }
.relief { fill: #d6dad1; opacity: 0.65; }
.facet { fill: #c6cbc3; opacity: 0.55; }
.snow { fill: #eceeea; opacity: 0.8; }
.water { fill: #acdafe; }
.island { fill: #e3e9dd; }
.minor-case, .major-case, .minor, .major, .border {
  fill: none;
  stroke-linejoin: round;
  stroke-linecap: round;
}
.minor-case { stroke: #f5d07a; stroke-width: 6.500; }
.major-case { stroke: #f3cc74; stroke-width: 11; }
.minor { stroke: #fee094; stroke-width: 3; }
.major { stroke: #ffe598; stroke-width: 6.500; }
.border { stroke: #777a7a; stroke-width: 3.800; }
.country, .city, .small {
  fill: #1b1c20;
  stroke: #f6f6ee;
  stroke-width: 5px;
  stroke-linejoin: round;
  paint-order: stroke;
}
.country { font-size: 31.500px; font-weight: 700; }
.city { font-size: 27px; font-weight: 500; fill: #222327; }
.small { font-size: 21px; }
.route {
  fill: none;
  stroke: #6495ed;
  stroke-width: 5.800;
}
.pin {
  fill: #ae2024;
  stroke: #140606;
  stroke-width: 2;
}
.logo {
  font: 400 39px Lato, sans-serif;
  stroke-width: 1.500px;
  filter: drop-shadow(0 0 1px #f4f4ee) drop-shadow(0 0 1px #f4f4ee) drop-shadow(0 0 1px #f4f4ee);
}
.types {
  position: absolute;
  left: 20px;
  top: 20px;
  display: flex;
  width: 337px;
  height: 80px;
  border-radius: 4px;
  background: #fff;
  box-shadow: 0 2px 8px rgba(0, 0, 0, 0.3);
}
.type {
  width: 140px;
  padding: 2px 0 0;
  border: 0;
  background: none;
  font: 400 36px Roboto, sans-serif;
  letter-spacing: -0.1px;
  color: #565656;
}
.type.active {
  font-weight: 600;
  letter-spacing: -0.5px;
  color: #000;
}
.type + .type {
  flex: 1;
  box-shadow: -2px 0 3px -1px rgba(0, 0, 0, 0.16);
}
.control {
  position: absolute;
  right: 19px;
  width: 80px;
  height: 80px;
  padding: 0;
  border: 0;
  border-radius: 4px;
  display: flex;
  align-items: center;
  justify-content: center;
  background: #fff;
  box-shadow: 0 2px 8px rgba(0, 0, 0, 0.3);
}
.fullscreen { top: 20px; }
.pegman { top: 332px; }
.zoom { top: 476px; height: 162px; }
.legal {
  position: absolute;
  right: 0;
  bottom: 0;
  display: flex;
  height: 28px;
  font-size: 20px;
  line-height: 27px;
  white-space: nowrap;
  color: #000;
}
.legal span {
  background: rgba(245, 245, 245, 0.7);
}
.legal .shortcuts { width: 184px; padding-left: 10px; margin-right: 2px; }
.legal .credits { width: 250px; padding-left: 10px; margin-right: 3px; }
.legal .scale { width: 209px; padding-left: 9.500px; margin-right: 1px; display: flex; gap: 6px; }
.legal .scale svg { margin-top: 6px; }
.legal .terms { width: 224px; padding-left: 10px; }
.title {
  margin: 0 0 0 -1px;
  padding: 2px 0 0 0;
  height: 73px;
  font-size: 46.500px;
  line-height: 57px;
  font-weight: 600;
  letter-spacing: -1.9px;
}
.list {
  list-style: none;
  margin: 0;
  padding: 0;
  border: 2px solid #dfdfdf;
  border-radius: 0 0 8px 8px;
}
.list li {
  height: 80px;
  padding: 17px 32px 15px;
}
.list li + li {
  height: 82px;
  border-top: 2px solid #dfdfdf;
}
.trips {
  width: 785px;
  letter-spacing: -0.43px;
}
.bar {
  height: 36px;
  border-radius: 8px 8px 0 0;
  background: #1b72f9;
}
.stations {
  border-top: 0;
}
</style>
